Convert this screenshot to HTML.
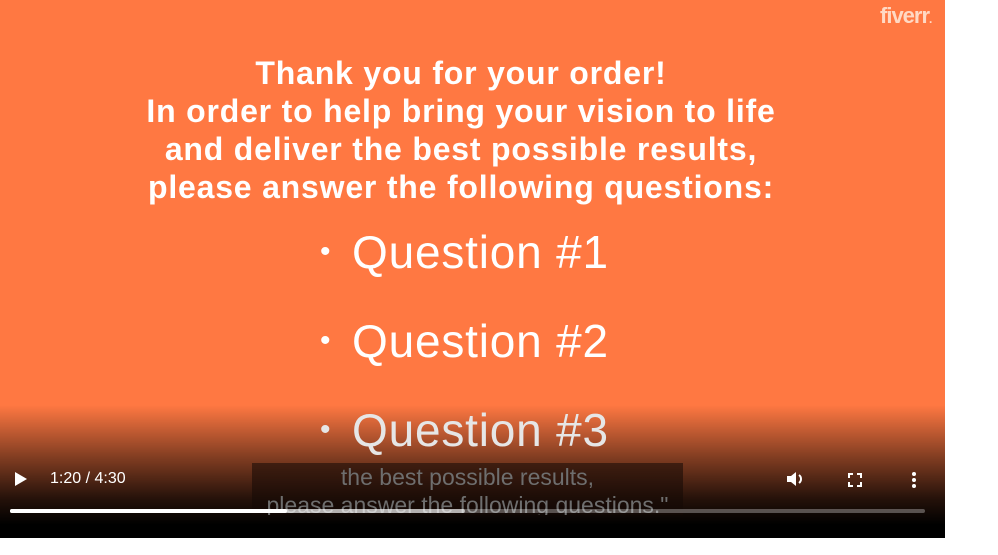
<!DOCTYPE html>
<html><head><style>
html,body{margin:0;padding:0;background:#fff;width:998px;height:555px;overflow:hidden;font-family:"Liberation Sans",Arial,sans-serif}
#v{position:absolute;left:0;top:0;width:945px;height:538px;background:#ff7842;overflow:hidden}
.h{position:absolute;left:0;width:922px;text-align:center;color:#fff;font-weight:bold;font-size:32px;letter-spacing:0.8px;line-height:34px}
.q{position:absolute;left:320px;color:#fff;font-size:46px;letter-spacing:0.8px;white-space:nowrap}
.q span{display:inline-block;width:32px;font-size:30px;vertical-align:middle;position:relative;top:-4px}
#grad{position:absolute;left:0;right:0;top:405px;bottom:0;background:linear-gradient(rgba(0,0,0,0),rgba(0,0,0,.5) 40%,rgba(0,0,0,.85) 70%,#000 90%)}
#sub{position:absolute;left:252px;top:463px;width:431px;height:52px;background:rgba(20,10,5,.55);color:#6e6e6e;font-size:23px;text-align:center;line-height:28px;overflow:hidden;white-space:nowrap}
.c{position:absolute;color:#fff;font-size:16px}
</style></head><body>
<div id="v">
<div style="position:absolute;left:880px;top:3px;color:#ffd9c4;font-weight:bold;font-size:22px;letter-spacing:-1px">fiverr<span style="font-size:12px">.</span></div>
<div class="h" style="top:56px">Thank you for your order!</div>
<div class="h" style="top:94px">In order to help bring your vision to life</div>
<div class="h" style="top:132px">and deliver the best possible results,</div>
<div class="h" style="top:170px">please answer the following questions:</div>
<div class="q" style="top:225px"><span>•</span>Question #1</div>
<div class="q" style="top:314px"><span>•</span>Question #2</div>
<div id="grad"></div>
<div class="q" style="top:403px;color:#e6e6e6"><span>•</span>Question #3</div>
<div id="sub">the best possible results,<br>please answer the following questions."</div>
<svg style="position:absolute;left:14px;top:471px" width="14" height="16"><path d="M1 1L13 8L1 15Z" fill="#fff"/></svg>
<div class="c" style="left:50px;top:470px">1:20 / 4:30</div>
<svg style="position:absolute;left:785px;top:469px" width="22" height="20" viewBox="0 0 22 20"><path d="M2 7h4l5-4v14l-5-4H2z" fill="#fff"/><path d="M14 6a5 5 0 0 1 0 8" stroke="#fff" stroke-width="2" fill="none"/></svg>
<svg style="position:absolute;left:848px;top:473px" width="14" height="14" viewBox="0 0 14 14" fill="none" stroke="#fff" stroke-width="2"><path d="M1 5V1h4M9 1h4v4M13 9v4H9M5 13H1V9"/></svg>
<svg style="position:absolute;left:911px;top:471px" width="6" height="18"><circle cx="3" cy="3" r="2" fill="#fff"/><circle cx="3" cy="9" r="2" fill="#fff"/><circle cx="3" cy="15" r="2" fill="#fff"/></svg>
<div style="position:absolute;left:10px;top:509px;width:915px;height:4px;background:rgba(255,255,255,.3);border-radius:2px"></div>
<div style="position:absolute;left:10px;top:509px;width:455px;height:4px;background:rgba(255,255,255,.55);border-radius:2px"></div>
<div style="position:absolute;left:10px;top:509px;width:277px;height:4px;background:#fff;border-radius:2px"></div>
</div>
</body></html>
